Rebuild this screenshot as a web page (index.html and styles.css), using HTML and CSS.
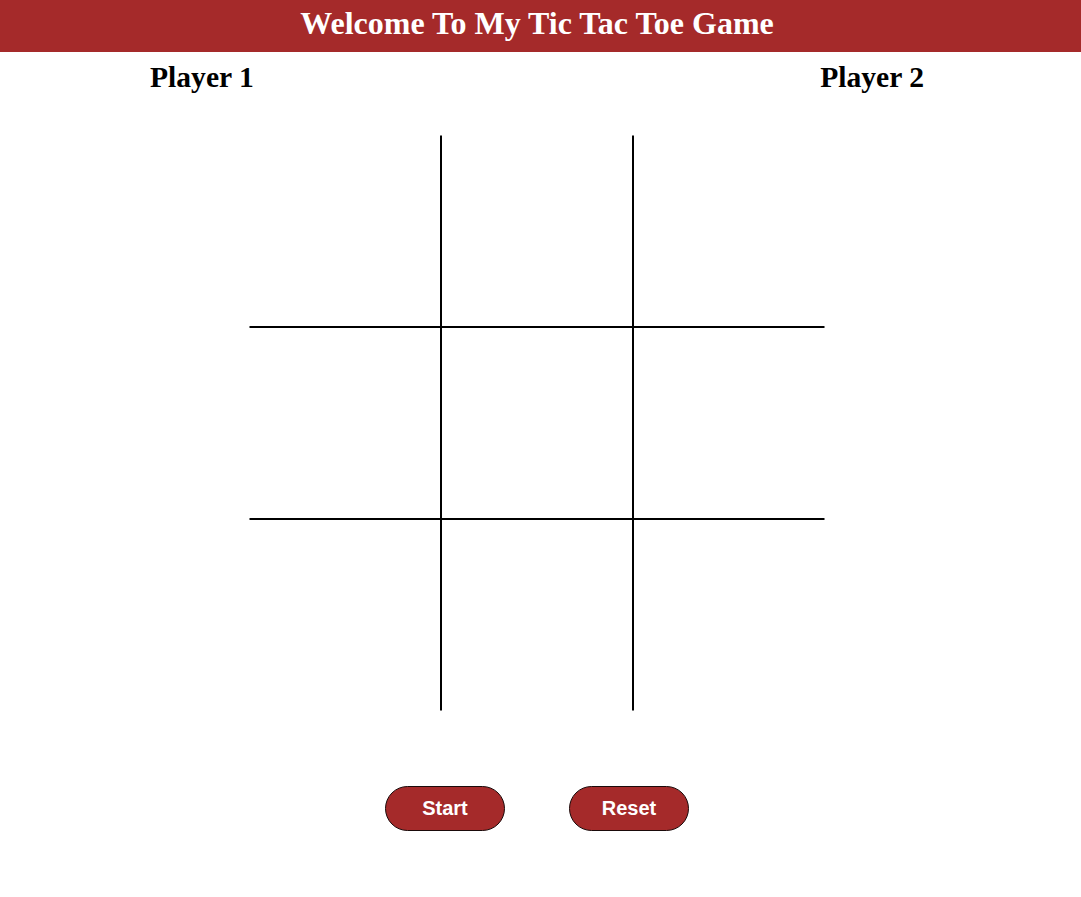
FILE: index.html
```html
<!DOCTYPE html>
<html lang="en">
<head>
<meta charset="utf-8">
<title>Tic Tac Toe</title>
<link rel="stylesheet" href="styles.css">
</head>
<body>
<header class="top-bar">
  <h1 class="title">Welcome To My Tic Tac Toe Game</h1>
</header>
<main class="page">
  <div class="players">
    <h2 class="player">Player 1</h2>
    <h2 class="player">Player 2</h2>
  </div>
  <div class="board">
    <div class="cell"></div><div class="cell"></div><div class="cell"></div>
    <div class="cell"></div><div class="cell"></div><div class="cell"></div>
    <div class="cell"></div><div class="cell"></div><div class="cell"></div>
  </div>
  <div class="controls">
    <button class="btn" type="button">Start</button>
    <button class="btn" type="button">Reset</button>
  </div>
</main>
</body>
</html>
```

FILE: styles.css
```css
html, body {
  margin: 0;
  padding: 0;
  background: #ffffff;
}

body {
  font-family: "Liberation Serif", "Times New Roman", serif;
  color: #000;
}

.top-bar {
  background: #a52a2a;
  height: 52px;
  box-sizing: border-box;
  padding: 6px 7px 0 0;
}

.title {
  margin: 0;
  text-align: center;
  color: #fff;
  font-size: 32px;
  line-height: 34px;
  font-weight: bold;
}

.page {
  width: 1074px;
}

.players {
  display: flex;
  justify-content: space-between;
  padding: 0 150px;
  margin-top: 9px;
}

.player {
  margin: 0;
  font-size: 29.6px;
  line-height: 33px;
  font-weight: bold;
}

.board {
  display: grid;
  grid-template-columns: repeat(3, 192px);
  grid-template-rows: repeat(3, 192px);
  width: 576px;
  margin: 41px auto 0;
}

.cell {
  box-sizing: border-box;
  border: 1px solid #000;
}

.cell:nth-child(-n+3) { border-top-color: transparent; }
.cell:nth-child(n+7) { border-bottom-color: transparent; }
.cell:nth-child(3n+1) { border-left-color: transparent; }
.cell:nth-child(3n) { border-right-color: transparent; }

.controls {
  display: flex;
  justify-content: center;
  gap: 64px;
  margin-top: 75px;
}

.btn {
  width: 120px;
  height: 45px;
  box-sizing: border-box;
  background: #a52a2a;
  color: #fff;
  border: 1px solid #1a0a0a;
  border-radius: 23px;
  font-family: "Liberation Sans", Arial, sans-serif;
  font-size: 20px;
  font-weight: bold;
  padding: 0;
  cursor: pointer;
}
```
